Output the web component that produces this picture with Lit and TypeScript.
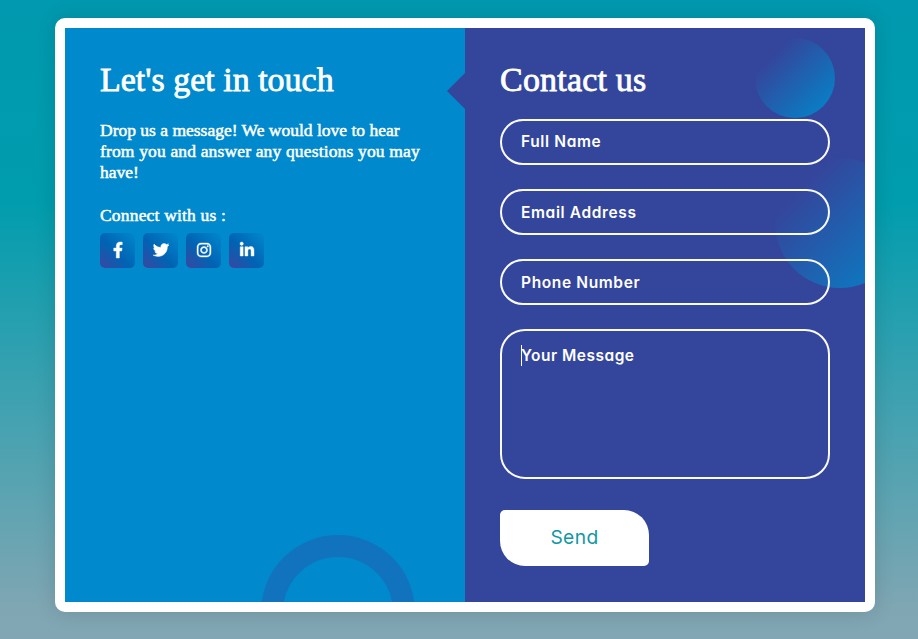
import { LitElement, html, css, svg } from "lit";
import { customElement } from "lit/decorators.js";

const socials = [
  { name: "Facebook", box: "0 0 320 512", path: svg`<path d="M279.14 288l14.22-92.66h-88.91v-60.13c0-25.35 12.42-50.06 52.24-50.06h40.42V6.26S260.43 0 225.36 0c-73.22 0-121.08 44.38-121.08 124.72v70.62H22.89V288h81.39v224h100.17V288z"/>` },
  { name: "Twitter", box: "0 0 512 512", path: svg`<path d="M459.37 151.716c.325 4.548.325 9.097.325 13.645 0 138.72-105.583 298.558-298.558 298.558-59.452 0-114.68-17.219-161.137-47.106 8.447.974 16.568 1.299 25.34 1.299 49.055 0 94.213-16.568 130.274-44.832-46.132-.975-84.792-31.188-98.112-72.772 6.498.974 12.995 1.624 19.818 1.624 9.421 0 18.843-1.3 27.614-3.573-48.081-9.747-84.143-51.98-84.143-102.985v-1.299c13.969 7.797 30.214 12.67 47.431 13.319-28.264-18.843-46.781-51.005-46.781-87.391 0-19.492 5.197-37.36 14.294-52.954 51.655 63.675 129.3 105.258 216.365 109.807-1.624-7.797-2.599-15.918-2.599-24.04 0-57.828 46.782-104.934 104.934-104.934 30.213 0 57.502 12.67 76.67 33.137 23.715-4.548 46.456-13.32 66.599-25.34-7.798 24.366-24.366 44.833-46.132 57.827 21.117-2.273 41.584-8.122 60.426-16.243-14.292 20.791-32.161 39.308-52.628 54.253z"/>` },
  { name: "Instagram", box: "0 0 448 512", path: svg`<path d="M224.1 141c-63.6 0-114.9 51.3-114.9 114.9s51.3 114.9 114.9 114.9S339 319.5 339 255.9 287.7 141 224.1 141zm0 189.6c-41.1 0-74.7-33.5-74.7-74.7s33.5-74.7 74.7-74.7 74.7 33.5 74.7 74.7-33.6 74.7-74.7 74.7zm146.4-194.3c0 14.9-12 26.8-26.8 26.8-14.9 0-26.8-12-26.8-26.8s12-26.8 26.8-26.8 26.8 12 26.8 26.8zm76.1 27.2c-1.7-35.9-9.9-67.7-36.2-93.9-26.2-26.2-58-34.4-93.9-36.2-37-2.1-147.9-2.1-184.9 0-35.8 1.7-67.6 9.9-93.9 36.1s-34.4 58-36.2 93.9c-2.1 37-2.1 147.9 0 184.9 1.7 35.9 9.9 67.7 36.2 93.9s58 34.4 93.9 36.2c37 2.1 147.9 2.1 184.9 0 35.9-1.7 67.7-9.9 93.9-36.2 26.2-26.2 34.4-58 36.2-93.9 2.1-37 2.1-147.8 0-184.8zM398.8 388c-7.8 19.6-22.9 34.7-42.6 42.6-29.5 11.7-99.5 9-132.1 9s-102.7 2.6-132.1-9c-19.6-7.8-34.7-22.9-42.6-42.6-11.7-29.5-9-99.5-9-132.1s-2.6-102.7 9-132.1c7.8-19.6 22.9-34.7 42.6-42.6 29.5-11.7 99.5-9 132.1-9s102.7-2.6 132.1 9c19.6 7.8 34.7 22.9 42.6 42.6 11.7 29.5 9 99.5 9 132.1s2.7 102.7-9 132.1z"/>` },
  { name: "LinkedIn", box: "0 0 448 512", path: svg`<path d="M100.28 448H7.4V148.9h92.88zM53.79 108.1C24.09 108.1 0 83.5 0 53.8a53.79 53.79 0 0 1 107.58 0c0 29.7-24.1 54.3-53.79 54.3zM447.9 448h-92.68V302.4c0-34.7-.7-79.2-48.29-79.2-48.29 0-55.69 37.7-55.69 76.7V448h-92.78V148.9h89.08v40.8h1.3c12.4-23.5 42.69-48.3 87.88-48.3 94 0 111.28 61.9 111.28 142.3V448z"/>` },
];

@customElement("app-root")
export class AppRoot extends LitElement {
  static styles = css`
    :host {
      display: block;
      height: 639px;
      box-sizing: border-box;
      padding: 18px 43px 27px 55px;
      overflow: hidden;
      background: linear-gradient(180deg, #0099af 0, #009dae 200px, #80a6b3 610px, #82a6b4 639px);
      color: #fff;
      font-family: "Liberation Serif", serif;
    }
    * { box-sizing: border-box; }
    .card {
      height: 594px;
      padding: 10px;
      display: grid;
      grid-template-columns: 400px 400px;
      border-radius: 10px;
      background: #fff;
      box-shadow: 0 0 20px 1px rgba(0, 0, 0, 0.12);
    }
    .info, .contact { position: relative; padding: 33px 35px 0; }
    .info { background: #0089cc; overflow: hidden; }
    .contact { background: #34469c; }
    .ring {
      position: absolute;
      left: 196px;
      top: 507px;
      width: 154px;
      height: 154px;
      border: 22px solid #1173bd;
      border-radius: 50%;
    }
    .clip { position: absolute; inset: 0; overflow: hidden; }
    .bubble {
      position: absolute;
      border-radius: 50%;
      background: linear-gradient(135deg, #34469c 22%, #0089cc);
    }
    .small { left: 290px; top: 10px; width: 80px; height: 80px; }
    .large { left: 310px; top: 130px; width: 130px; height: 130px; opacity: 0.9; }
    .notch {
      position: absolute;
      left: -18px;
      top: 45px;
      width: 18px;
      height: 36px;
      background: #34469c;
      clip-path: polygon(100% 0, 0 50%, 100% 100%);
    }
    h1 {
      margin: 0;
      height: 38px;
      font-size: 34px;
      line-height: 38px;
      font-weight: 400;
      -webkit-text-stroke: 0.8px #fff;
      white-space: nowrap;
    }
    .h-contact { letter-spacing: 0.2px; }
    .intro, .connect { margin: 0; font-size: 17.5px; line-height: 21px; white-space: nowrap; -webkit-text-stroke: 0.5px #fff; }
    .intro { margin-top: 21px; }
    .line { display: block; }
    .l2 { letter-spacing: 0.155px; }
    .connect { margin-top: 22px; letter-spacing: 0.18px; }
    .socials { display: flex; gap: 8px; margin-top: 7px; }
    .social {
      display: grid;
      place-items: center;
      width: 35px;
      height: 35px;
      padding-bottom: 1px;
      border-radius: 5px;
      background: linear-gradient(45deg, #3c46a0, #0063b4 45%, #0089cc);
    }
    .social svg { display: block; height: 16px; overflow: visible; fill: #fff; stroke: #fff; stroke-width: 13px; }
    form { position: relative; display: flex; flex-direction: column; align-items: flex-start; gap: 24px; margin-top: 20px; }
    .field {
      display: block;
      width: 330px;
      height: 46px;
      margin: 0;
      padding: 0 19px;
      border: 2px solid #fafafa;
      border-radius: 25px;
      outline: 0;
      background: none;
      color: #fff;
      font: 600 15.5px/21px Inter, sans-serif;
      font-feature-settings: "cv11";
      letter-spacing: 0.63px;
      resize: none;
      overflow: hidden;
    }
    .field::placeholder { color: #fff; opacity: 1; }
    .name { padding-bottom: 1px; }
    .message { position: relative; }
    .area { height: 150px; padding-top: 14px; letter-spacing: 0.5px; }
    .caret { position: absolute; left: 21px; top: 16px; width: 1px; height: 21px; background: #fff; }
    button {
      width: 149px;
      height: 56px;
      margin-top: 7px;
      padding: 0 0 2px;
      border: 0;
      border-radius: 5px 25px 5px 25px;
      background: #fff;
      color: #0f98a3;
      font: 400 19.2px/24px Inter, sans-serif;
      letter-spacing: 0.4px;
    }
  `;

  render() {
    return html`
      <main class="card">
        <section class="info">
          <div class="ring"></div>
          <h1 class="h-info">Let's get in touch</h1>
          <p class="intro">
            <span class="line l1">Drop us a message! We would love to hear</span>
            <span class="line l2">from you and answer any questions you may</span>
            <span class="line l3">have!</span>
          </p>
          <p class="connect">Connect with us :</p>
          <div class="socials">
            ${socials.map((s) => html`<a class="social" aria-label=${s.name}><svg viewBox=${s.box}>${s.path}</svg></a>`)}
          </div>
        </section>
        <section class="contact">
          <div class="clip"><div class="bubble small"></div><div class="bubble large"></div></div>
          <div class="notch"></div>
          <h1 class="h-contact">Contact us</h1>
          <form>
            <input class="field name" placeholder="Full Name" />
            <input class="field email" placeholder="Email Address" />
            <input class="field phone" placeholder="Phone Number" />
            <div class="message"><textarea class="field area" placeholder="Your Message"></textarea><span class="caret"></span></div>
            <button type="button">Send</button>
          </form>
        </section>
      </main>
    `;
  }
}
